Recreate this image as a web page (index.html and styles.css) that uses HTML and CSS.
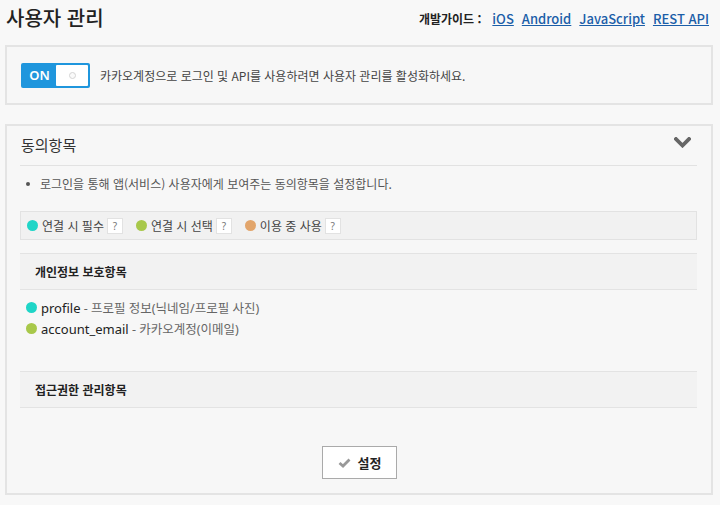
FILE: index.html
```html
<!DOCTYPE html>
<html lang="ko">
<head>
<meta charset="utf-8">
<title>사용자 관리</title>
<link rel="stylesheet" href="styles.css">
</head>
<body>
<header class="top">
  <h1 class="title">사용자 관리</h1>
  <nav class="guide">
    <span class="guide-label">개발가이드 :</span>
    <a href="#">iOS</a>
    <a href="#">Android</a>
    <a href="#">JavaScript</a>
    <a href="#">REST API</a>
  </nav>
</header>

<section class="panel panel-toggle">
  <div class="toggle">
    <span class="toggle-on">ON</span>
    <span class="toggle-knob"><span class="knob-dot"></span></span>
  </div>
  <p class="toggle-text">카카오계정으로 로그인 및 API를 사용하려면 사용자 관리를 활성화하세요.</p>
</section>

<section class="panel panel-consent">
  <div class="consent-head">
    <h2 class="consent-title">동의항목</h2>
    <svg class="chevron" width="17" height="11" viewBox="0 0 17 11"><path d="M2 2 L8.5 8.5 L15 2" fill="none" stroke="#666" stroke-width="3.8" stroke-linecap="square"/></svg>
  </div>
  <ul class="notes">
    <li>로그인을 통해 앱(서비스) 사용자에게 보여주는 동의항목을 설정합니다.</li>
  </ul>
  <div class="legend">
    <span class="legend-item"><span class="dot dot-teal"></span>연결 시 필수<span class="help">?</span></span>
    <span class="legend-item"><span class="dot dot-green"></span>연결 시 선택<span class="help">?</span></span>
    <span class="legend-item"><span class="dot dot-orange"></span>이용 중 사용<span class="help">?</span></span>
  </div>
  <div class="group-head">개인정보 보호항목</div>
  <ul class="items">
    <li><span class="dot dot-teal"></span><span class="item-key">profile</span><span class="item-desc"> - 프로필 정보(닉네임/프로필 사진)</span></li>
    <li><span class="dot dot-green"></span><span class="item-key">account_email</span><span class="item-desc"> - 카카오계정(이메일)</span></li>
  </ul>
  <div class="group-head group-head-2">접근권한 관리항목</div>
  <div class="actions">
    <button class="btn" type="button">
      <svg class="check" width="13" height="10" viewBox="0 0 13 10"><path d="M1.5 5 L5 8 L11.5 1.5" fill="none" stroke="#999" stroke-width="2.8"/></svg>
      <span>설정</span>
    </button>
  </div>
</section>
</body>
</html>
```

FILE: styles.css
```css
* { box-sizing: border-box; }
html, body { margin: 0; padding: 0; }
body {
  background: #f8f8f8;
  font-family: "Noto Sans", "Noto Sans CJK KR", sans-serif;
  color: #333;
  width: 720px;
  height: 505px;
  overflow: hidden;
}
.top {
  height: 45px;
  display: flex;
  justify-content: space-between;
  align-items: flex-start;
  padding: 4px 11px 0 6px;
}
.title {
  margin: 0;
  font-family: "Noto Sans CJK KR", sans-serif;
  font-size: 20px;
  font-weight: 500;
  color: #222;
  line-height: 28px;
}
.guide {
  display: flex;
  align-items: center;
  gap: 8px;
  font-size: 13px;
  line-height: 18px;
  margin-top: 6px;
  font-family: "Noto Sans CJK KR", sans-serif;
}
.guide-label { font-weight: 700; color: #222; margin-right: 3px; font-size: 12px; }
.guide a {
  color: #1b5ea8;
  text-decoration: underline;
  font-weight: 500;
}
.panel {
  margin: 0 7px 0 5px;
  border: 2px solid #e4e4e4;
  background: #f7f7f7;
}
.panel-toggle {
  height: 60px;
  display: flex;
  align-items: center;
  padding: 0 14px;
}
.toggle {
  display: flex;
  align-items: center;
  width: 69px;
  height: 25px;
  background: #1f96dd;
  border-radius: 2px;
  padding: 2px;
}
.toggle-on {
  width: 33px;
  color: #fff;
  font-size: 13px;
  font-weight: 600;
  text-align: center;
  font-family: "Noto Sans", sans-serif;
}
.toggle-knob {
  flex: 1;
  height: 21px;
  background: #fff;
  border-radius: 1px;
  display: flex;
  align-items: center;
  justify-content: center;
}
.knob-dot {
  width: 7px;
  height: 7px;
  border-radius: 50%;
  border: 1px solid #d4d4d4;
  background: #fafafa;
}
.toggle-text {
  margin: 0 0 0 10px;
  font-size: 12px;
  color: #444;
  font-family: "Noto Sans CJK KR", sans-serif;
}
.panel-consent {
  margin-top: 19px;
  height: 371px;
  padding: 0 14px 0 13px;
}
.consent-head {
  height: 40px;
  border-bottom: 1px solid #e2e2e2;
  display: flex;
  justify-content: space-between;
  align-items: center;
  padding: 0 6px 2px 1px;
}
.consent-title {
  margin: 0;
  font-size: 15px;
  font-weight: 400;
  color: #333;
  font-family: "Noto Sans CJK KR", sans-serif;
}
.chevron { margin-top: -4px; }
.notes {
  list-style: none;
  margin: 9px 0 0;
  padding: 0 0 0 20px;
  font-size: 12px;
  line-height: 18px;
  color: #555;
  font-family: "Noto Sans CJK KR", sans-serif;
}
.notes li { position: relative; }
.notes li::before {
  content: "";
  position: absolute;
  left: -14px;
  top: 7px;
  width: 4px;
  height: 4px;
  border-radius: 50%;
  background: #555;
}
.legend {
  margin-top: 18px;
  height: 29px;
  background: #f1f1f1;
  border: 1px solid #e2e2e2;
  display: flex;
  align-items: center;
  padding: 0 6px;
  gap: 13px;
  font-size: 12px;
  color: #444;
  font-family: "Noto Sans CJK KR", sans-serif;
}
.legend-item { display: flex; align-items: center; }
.dot {
  display: inline-block;
  width: 11px;
  height: 11px;
  border-radius: 50%;
  margin-right: 4px;
  flex: none;
}
.dot-teal { background: #1fd5c7; }
.dot-green { background: #a8c84a; }
.dot-orange { background: #e2a56b; }
.help {
  display: inline-flex;
  align-items: center;
  justify-content: center;
  width: 16px;
  height: 16px;
  margin-left: 3px;
  background: #fff;
  border: 1px solid #e2e2e2;
  font-size: 10px;
  color: #777;
  font-family: "Noto Sans", sans-serif;
}
.group-head {
  margin-top: 13px;
  height: 37px;
  background: #f2f2f2;
  border-top: 1px solid #e3e3e3;
  border-bottom: 1px solid #e3e3e3;
  display: flex;
  align-items: center;
  padding-left: 15px;
  font-size: 12px;
  font-weight: 700;
  color: #222;
  font-family: "Noto Sans CJK KR", sans-serif;
}
.group-head-2 { margin-top: 32px; }
.items {
  list-style: none;
  margin: 7px 0 0;
  padding: 0 0 0 6px;
}
.items li {
  display: flex;
  align-items: center;
  height: 21px;
  font-size: 13px;
}
.item-key { color: #222; font-family: "Noto Sans", sans-serif; }
.item-desc { color: #666; font-family: "Noto Sans", "Noto Sans CJK KR", sans-serif; font-size: 12.5px; white-space: pre; }
.actions {
  display: flex;
  justify-content: center;
  margin-top: 38px;
  padding-left: 2px;
}
.btn {
  width: 75px;
  height: 33px;
  background: #fff;
  border: 1px solid #aaa;
  display: flex;
  align-items: center;
  justify-content: center;
  gap: 7px;
  font-size: 13px;
  font-weight: 700;
  color: #222;
  font-family: "Noto Sans CJK KR", sans-serif;
  padding: 0;
  cursor: pointer;
}
```
